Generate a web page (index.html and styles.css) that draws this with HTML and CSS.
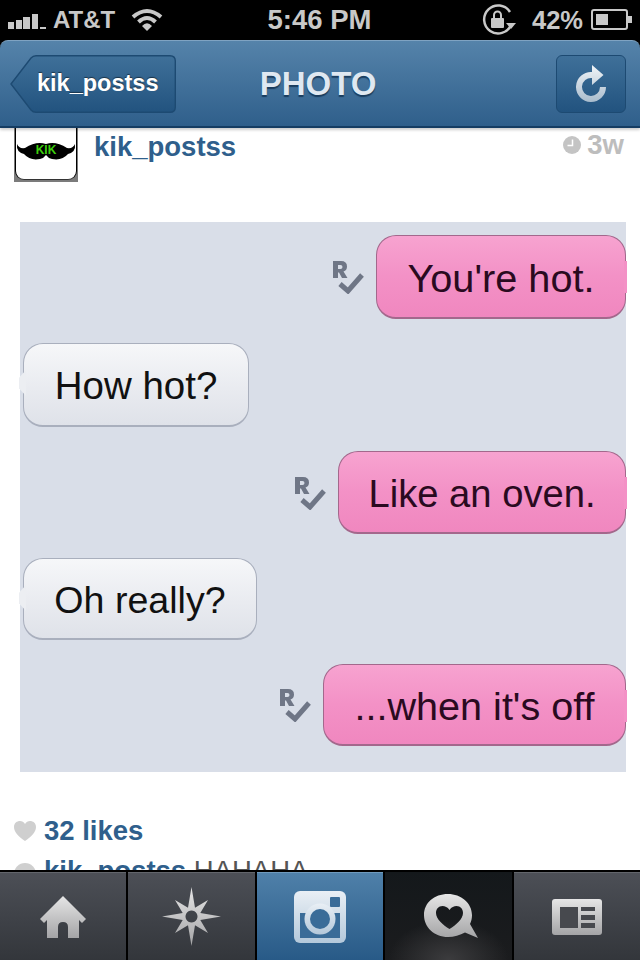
FILE: index.html
```html
<!DOCTYPE html>
<html lang="en">
<head>
    <meta charset="UTF-8">
    <meta name="viewport" content="width=device-width, initial-scale=1.0">
    <title>Photo</title>
    <link rel="stylesheet" href="styles.css">
</head>
<body>
    <div class="phone">
        <div class="status-bar">
            <div class="status-left">
                <svg class="signal" width="40" height="20" viewBox="0 0 40 20">
                    <rect x="0" y="12" width="6" height="7" fill="#c8c8c8"/>
                    <rect x="8" y="10" width="6" height="9" fill="#c8c8c8"/>
                    <rect x="15" y="7" width="7" height="12" fill="#c8c8c8"/>
                    <rect x="24" y="4" width="6" height="15" fill="#c8c8c8"/>
                    <rect x="32" y="17" width="6" height="2" fill="#c8c8c8"/>
                </svg>
                <span class="carrier">AT&amp;T</span>
                <svg class="wifi" width="32" height="24" viewBox="0 0 32 24">
                    <path d="M2 9 Q16 -3 30 9" fill="none" stroke="#c8c8c8" stroke-width="4"/>
                    <path d="M7.500 14 Q16 6 24.500 14" fill="none" stroke="#c8c8c8" stroke-width="4"/>
                    <path d="M11 18 Q16 12.500 21 18 L16 23 Z" fill="#c8c8c8"/>
                </svg>
            </div>
            <span class="clock">5:46 PM</span>
            <div class="status-right">
                <svg width="34" height="32" viewBox="0 0 34 32">
                    <path d="M29 21 A14 14 0 1 1 28 8" fill="none" stroke="#c8c8c8" stroke-width="2.500"/>
                    <path d="M24 19 L34 19 L29 25 Z" fill="#c8c8c8"/>
                    <rect x="9" y="14" width="13" height="10" rx="1" fill="#c8c8c8"/>
                    <path d="M12 14 V11 A3.500 3.500 0 0 1 19 11 V14" fill="none" stroke="#c8c8c8" stroke-width="2"/>
                </svg>
                <span class="battery-text">42%</span>
                <svg width="42" height="22" viewBox="0 0 42 22">
                    <rect x="1" y="1" width="35" height="19" rx="2" fill="none" stroke="#c8c8c8" stroke-width="2"/>
                    <rect x="5" y="5" width="12" height="11" fill="#c8c8c8"/>
                    <rect x="37" y="7" width="4" height="7" fill="#c8c8c8"/>
                </svg>
            </div>
        </div>

        <div class="nav-bar">
            <div class="back-btn">
                <svg class="back-shape" width="166" height="58" viewBox="0 0 166 58">
                    <defs>
                        <linearGradient id="btnFill" x1="0" y1="0" x2="0" y2="1">
                            <stop offset="0" stop-color="#3f7099"/>
                            <stop offset="1" stop-color="#22537f"/>
                        </linearGradient>
                    </defs>
                    <path d="M1 29 L21 3 Q23 .7 26 .7 H160 Q165.300 .7 165.300 6 V52 Q165.300 57.300 160 57.300 H26 Q23 57.300 21 55 Z" fill="url(#btnFill)" stroke="#1d4a72" stroke-width="1.400"/>
                </svg>
                <span class="back-label">kik_postss</span>
            </div>
            <div class="nav-title">PHOTO</div>
            <div class="refresh-btn">
                <svg width="30" height="37" viewBox="0 0 30 37">
                    <defs>
                        <linearGradient id="refreshFill" x1="0" y1="0" x2="0" y2="1">
                            <stop offset="0" stop-color="#f2f5f8"/>
                            <stop offset="1" stop-color="#a9bccd"/>
                        </linearGradient>
                    </defs>
                    <path d="M16 0 L27.500 10 L16 20 V13 A9 9 0 1 0 24 22 H30 A15 15 0 1 1 16 7 Z" fill="url(#refreshFill)"/>
                </svg>
            </div>
        </div>

        <div class="content">
            <div class="post-head">
                <div class="avatar">
                    <div class="avatar-inner">
                        <svg width="60" height="30" viewBox="0 0 60 30">
                            <path d="M1 9 Q0 17 8 19 Q14 26 24 24 Q28 23 30 20 Q32 23 36 24 Q46 26 52 19 Q60 17 59 9 Q57 14 51 13 Q40 6 30 9 Q20 6 9 13 Q3 14 1 9 Z" fill="#000"/>
                            <text x="30" y="19" class="avatar-text" text-anchor="middle">KIK</text>
                        </svg>
                    </div>
                </div>
                <a class="username" href="#">kik_postss</a>
                <div class="time">
                    <svg width="18" height="18" viewBox="0 0 18 18">
                        <circle cx="9" cy="9" r="9" fill="#c4c4c4"/>
                        <path d="M9.500 3.500 V9.500 H4.500" fill="none" stroke="#fff" stroke-width="1.500"/>
                    </svg>
                    <span>3w</span>
                </div>
            </div>

            <div class="photo">
                <div class="msg-row right">
                    <svg class="read-icon" width="32" height="34" viewBox="0 0 32 34"><use href="#readMark"/></svg>
                    <div class="bubble pink b-hot">You're hot.</div>
                </div>
                <div class="msg-row left">
                    <div class="bubble grey b-how">How hot?</div>
                </div>
                <div class="msg-row right">
                    <svg class="read-icon" width="32" height="34" viewBox="0 0 32 34"><use href="#readMark"/></svg>
                    <div class="bubble pink b-oven">Like an oven.</div>
                </div>
                <div class="msg-row left">
                    <div class="bubble grey b-really">Oh really?</div>
                </div>
                <div class="msg-row right">
                    <svg class="read-icon" width="32" height="34" viewBox="0 0 32 34"><use href="#readMark"/></svg>
                    <div class="bubble pink b-off">...when it's off</div>
                </div>
            </div>

            <div class="likes">
                <svg width="22" height="20" viewBox="0 0 22 20">
                    <path d="M11 20 C4 15 0 11 0 6 C0 2 3 0 6 0 C8 0 10 1 11 3 C12 1 14 0 16 0 C19 0 22 2 22 6 C22 11 18 15 11 20 Z" fill="#cfcfcf"/>
                </svg>
                <a href="#">32 likes</a>
            </div>
            <div class="comment">
                <span class="comment-dot"></span>
                <a href="#">kik_postss</a> <span class="comment-text">HAHAHA</span>
            </div>
        </div>

        <div class="tab-bar">
            <div class="tab">
                <svg width="46" height="42" viewBox="0 0 46 42">
                    <defs>
                        <linearGradient id="iconFill" x1="0" y1="0" x2="0" y2="1">
                            <stop offset="0" stop-color="#e6e6e6"/>
                            <stop offset="1" stop-color="#a4a4a6"/>
                        </linearGradient>
                    </defs>
                    <path d="M23 0 L46 23 L42 27 L39 24 V42 H28 V31 Q28 26 23 26 Q18 26 18 31 V42 H7 V24 L4 27 L0 23 Z" fill="url(#iconFill)"/>
                </svg>
            </div>
            <div class="tab">
                <svg width="59" height="59" viewBox="0 0 59 59">
                    <path fill-rule="evenodd" d="M29.500 0 L33 20.700 L46 13 L38.300 26 L59 29.500 L38.300 33 L46 46 L33 38.300 L29.500 59 L26 38.300 L13 46 L20.700 33 L0 29.500 L20.700 26 L13 13 L26 20.700 Z M29.500 23.500 A6 6 0 1 0 29.501 23.500 Z" fill="url(#iconFill)"/>
                </svg>
            </div>
            <div class="tab tab-active">
                <svg width="52" height="52" viewBox="0 0 52 52">
                    <defs>
                        <linearGradient id="camFill" x1="0" y1="0" x2="0" y2="1">
                            <stop offset="0" stop-color="#e9eff5"/>
                            <stop offset="1" stop-color="#b4c8da"/>
                        </linearGradient>
                    </defs>
                    <rect width="52" height="52" rx="6" fill="url(#camFill)"/>
                    <rect x="6" y="22" width="40" height="25" fill="#3a6c98"/>
                    <circle cx="26" cy="28" r="15.500" fill="url(#camFill)"/>
                    <circle cx="26" cy="28" r="10" fill="#3a6c98"/>
                    <rect x="36" y="6" width="10" height="10" rx="1" fill="#3a6c98"/>
                </svg>
            </div>
            <div class="tab tab-dark">
                <svg class="bubble-icon" width="54" height="44" viewBox="0 0 54 44">
                    <path fill-rule="evenodd" d="M24 0 C37 0 48 9 48 21 C48 24 47.500 27 46 30 L54 44 L41 38.500 C36 41 30 43 24 43 C10 43 0 33 0 21 C0 9 10 0 24 0 Z M25.500 16 C23.500 13 21 12 18.500 12 C14.500 12 12 15 12 19 C12 25 19 31 25.500 35 C32 31 39 25 39 19 C39 15 36.500 12 32.500 12 C30 12 27.500 13 25.500 16 Z" fill="url(#iconFill)"/>
                </svg>
            </div>
            <div class="tab">
                <svg width="50" height="36" viewBox="0 0 50 36">
                    <rect width="50" height="36" rx="3" fill="url(#iconFill)"/>
                    <rect x="8" y="8" width="18" height="21" fill="#47494e"/>
                    <rect x="29" y="8" width="14" height="4" fill="#47494e"/>
                    <rect x="29" y="16" width="14" height="5" fill="#47494e"/>
                    <rect x="29" y="24" width="14" height="5" fill="#47494e"/>
                </svg>
            </div>
        </div>
    </div>

    <svg class="sprite" width="0" height="0">
        <symbol id="readMark" viewBox="0 0 32 34">
            <path d="M1 1 H9 Q15 1 15 6.500 Q15 10.500 11.500 11.500 L15.500 18 H10 L7 12.500 H6 V18 H1 Z M6 5 V9 H8.500 Q10.500 9 10.500 7 Q10.500 5 8.500 5 Z" fill="#6f7686" fill-rule="evenodd"/>
            <path d="M8 24 L16 31 L30 15" fill="none" stroke="#6f7686" stroke-width="5"/>
        </symbol>
    </svg>
</body>
</html>
```

FILE: styles.css
```css
/* Basic Reset */
* {
    margin: 0;
    padding: 0;
    box-sizing: border-box;
}

body {
    font-family: 'Liberation Sans', Arial, sans-serif;
    background: #000;
}

a {
    color: #2f5f8c;
    text-decoration: none;
    font-weight: bold;
}

.phone {
    width: 640px;
    height: 960px;
    display: flex;
    flex-direction: column;
    overflow: hidden;
    background: #000;
}

.sprite {
    display: block;
}

/* Status bar */
.status-bar {
    height: 40px;
    flex: none;
    display: grid;
    grid-template-columns: 1fr auto 1fr;
    align-items: center;
    padding: 0 7px 0 8px;
    color: #c8c8c8;
    font-weight: bold;
}

.status-left {
    display: flex;
    align-items: center;
}

.carrier {
    font-size: 24px;
    margin-left: 5px;
}

.wifi {
    margin-left: 16px;
}

.clock {
    font-size: 27.5px;
    transform: translateX(-1px);
}

.status-right {
    display: flex;
    align-items: center;
    justify-content: flex-end;
}

.battery-text {
    font-size: 25.5px;
    margin: 0 8px 0 16px;
}

/* Nav */
.nav-bar {
    height: 88px;
    flex: none;
    display: grid;
    grid-template-columns: 1fr auto 1fr;
    align-items: center;
    padding: 0 14px 0 10px;
    border-radius: 8px 8px 0 0;
    border-top: 1px solid #7fa3c2;
    border-bottom: 2px solid #153d63;
    background: linear-gradient(to bottom, #5583aa, #2f5f8b);
    box-shadow: 0 2px 3px rgba(0, 0, 0, 0.2);
    position: relative;
    z-index: 1;
}

.back-btn {
    position: relative;
    width: 166px;
    height: 58px;
    display: flex;
    align-items: center;
    padding-left: 27px;
}

.back-shape {
    position: absolute;
    top: 0;
    left: 0;
}

.back-label {
    position: relative;
    color: #fff;
    font-size: 23.5px;
    font-weight: bold;
    text-shadow: 0 -1px 1px rgba(0, 0, 0, 0.5);
}

.nav-title {
    color: #dfe8f1;
    font-size: 33px;
    font-weight: bold;
    text-shadow: 0 2px 1px rgba(10, 40, 70, 0.7);
}

.refresh-btn {
    justify-self: end;
    width: 70px;
    height: 58px;
    display: flex;
    align-items: center;
    justify-content: center;
    border: 1px solid #1d4a72;
    border-radius: 6px;
    background: linear-gradient(to bottom, #3f7099, #22537f);
}

/* Post */
.content {
    height: 742px;
    flex: none;
    overflow: hidden;
    background: #fff;
}

.post-head {
    height: 54px;
    display: flex;
    padding: 0 16px 0 14px;
}

.avatar {
    width: 64px;
    height: 54px;
    background: #7b7b7b;
}

.avatar-inner {
    width: 62px;
    height: 52px;
    margin-left: 1px;
    padding-top: 7px;
    background: #fff;
    border-left: 1px solid #000;
    border-right: 1px solid #000;
    border-bottom: 1px solid #333;
    border-radius: 0 0 9px 9px;
}

.avatar-inner svg {
    display: block;
}

.avatar-text {
    font-size: 12px;
    font-weight: bold;
    fill: #3cd00c;
}

.username {
    font-size: 27.5px;
    margin: 3px 0 0 16px;
}

.time {
    margin-left: auto;
    height: 34px;
    display: flex;
    align-items: center;
    gap: 6px;
    color: #bdbdbd;
    font-size: 27.5px;
    font-weight: bold;
}

.photo {
    width: 606px;
    height: 550px;
    margin: 40px 0 0 20px;
    padding-top: 13px;
    background: #d9dee8;
    display: flex;
    flex-direction: column;
    gap: 24px;
}

.msg-row {
    display: flex;
    align-items: center;
    gap: 12px;
}

.msg-row.right {
    justify-content: flex-end;
}

.msg-row.left {
    padding-left: 3px;
}

.bubble {
    position: relative;
    height: 84px;
    padding-top: 3px;
    display: flex;
    align-items: center;
    justify-content: center;
    border-radius: 20px;
    color: #111;
}

.bubble.pink {
    color: #2a0a20;
    border: 1.5px solid #a3688c;
    border-bottom-width: 2.5px;
    background: linear-gradient(to bottom, #f7a3d0, #f391c6 50%, #f087bf);
}

/* tail stubs, cut off by the edge of the photo */
.bubble.pink::after {
    content: "";
    position: absolute;
    right: -2px;
    top: 25px;
    width: 3px;
    height: 32px;
    background: #f391c6;
}

.bubble.grey {
    border: 1.5px solid #a9afbd;
    border-bottom-width: 2.5px;
    background: linear-gradient(to bottom, #f6f7f9, #e9ebf0 55%, #dfe2e9);
}

.bubble.grey::before {
    content: "";
    position: absolute;
    left: -5px;
    top: 26px;
    width: 7px;
    height: 26px;
    background: #eceef2;
    clip-path: polygon(100% 0, 0 30%, 0 70%, 100% 100%);
}

.b-hot { width: 250px; font-size: 39.7px; }
.b-how { width: 226px; font-size: 38.5px; }
.b-oven { width: 288px; height: 83px; font-size: 38.2px; }
.b-really { width: 234px; height: 82px; font-size: 37.6px; }
.b-off { width: 303px; height: 82px; font-size: 39.6px; }

.likes {
    display: flex;
    align-items: center;
    gap: 8px;
    margin: 43px 0 0 14px;
    font-size: 27.5px;
}

.comment {
    position: relative;
    margin: 8px 0 0 44px;
    font-size: 27.5px;
    white-space: nowrap;
}

.comment-dot {
    position: absolute;
    left: -30px;
    top: 8px;
    width: 22px;
    height: 22px;
    border-radius: 50%;
    background: #cfcfcf;
}

.comment-text {
    color: #555;
}

/* Tabs */
.tab-bar {
    height: 90px;
    flex: none;
    display: flex;
    gap: 2px;
    padding-top: 2px;
    background: #000;
    position: relative;
    z-index: 1;
}

.tab {
    flex: 1;
    display: flex;
    align-items: center;
    justify-content: center;
    background: linear-gradient(to bottom, #4c4f56, #33363b);
    border-top: 1px solid #62656b;
}

.tab-active {
    border-top: 1px solid #6f9abd;
    background: linear-gradient(to bottom, #4f80a9, #285a87);
}

.tab-dark {
    border-top: none;
    background: radial-gradient(ellipse 60px 40px at 50% 100%, #3c3c3e, transparent), linear-gradient(to bottom, #14181b, #1b1c1e);
}

.bubble-icon {
    margin-left: 5px;
}
```
